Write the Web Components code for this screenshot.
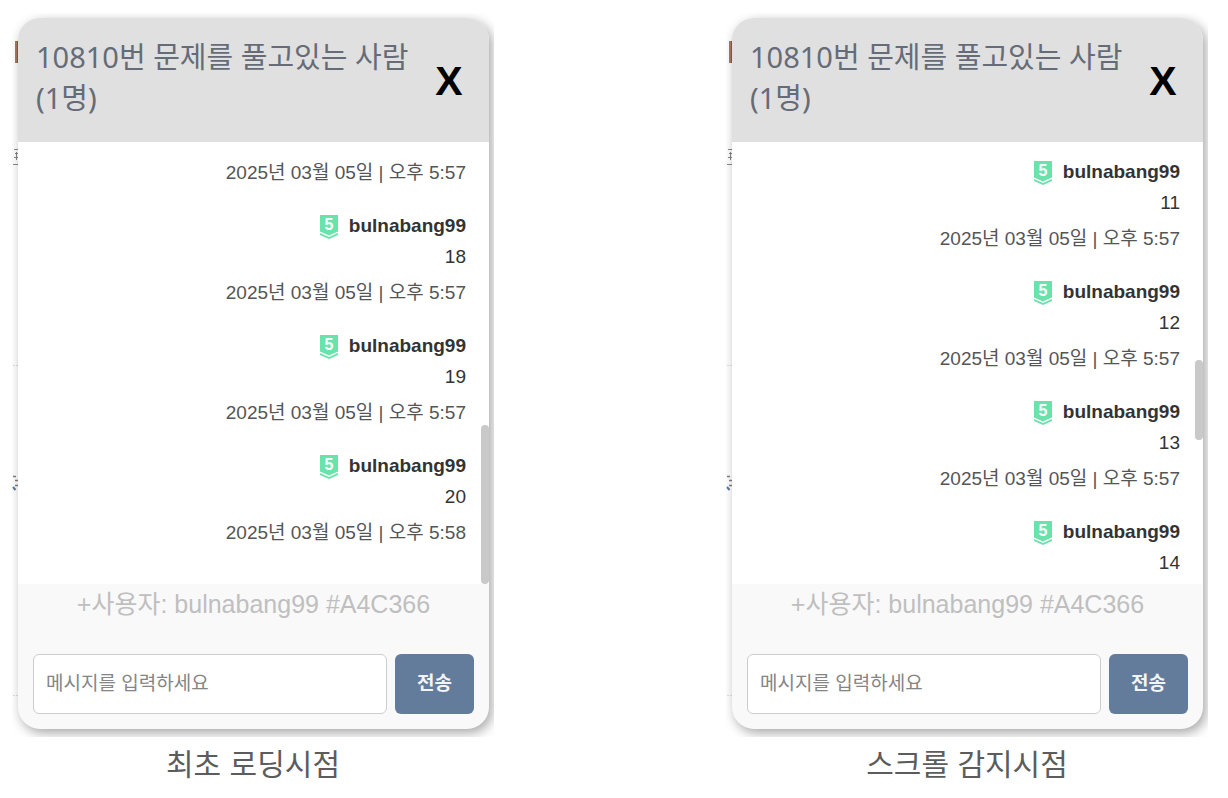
<!DOCTYPE html>
<html lang="ko">
<head>
<meta charset="utf-8">
<meta name="viewport" content="width=device-width, initial-scale=1">
<title>채팅 스크롤 비교</title>
<style>
  html, body { margin: 0; background: #fff; }
  body { font-family: "Liberation Sans", "Noto Sans CJK KR", sans-serif; }
</style>
</head>
<body>
<chat-compare>
  <chat-figure caption="최초 로딩시점">
    <chat-window heading="10810번 문제를 풀고있는 사람 (1명)" joined="+사용자: bulnabang99 #A4C366" scroll="end">
      <chat-message date="2025년 03월 05일 | 오후 5:57"></chat-message>
      <chat-message user="bulnabang99" date="2025년 03월 05일 | 오후 5:57">18</chat-message>
      <chat-message user="bulnabang99" date="2025년 03월 05일 | 오후 5:57">19</chat-message>
      <chat-message user="bulnabang99" date="2025년 03월 05일 | 오후 5:58">20</chat-message>
    </chat-window>
  </chat-figure>
  <chat-figure caption="스크롤 감지시점">
    <chat-window heading="10810번 문제를 풀고있는 사람 (1명)" joined="+사용자: bulnabang99 #A4C366" scroll="middle">
      <chat-message user="bulnabang99" date="2025년 03월 05일 | 오후 5:57">11</chat-message>
      <chat-message user="bulnabang99" date="2025년 03월 05일 | 오후 5:57">12</chat-message>
      <chat-message user="bulnabang99" date="2025년 03월 05일 | 오후 5:57">13</chat-message>
      <chat-message user="bulnabang99">14</chat-message>
    </chat-window>
  </chat-figure>
</chat-compare>

<script>
  class ChatCompare extends HTMLElement {
    constructor() {
      super();
      this.attachShadow({ mode: 'open' }).innerHTML = `
        <style>
          :host {
            display: grid;
            grid-template-columns: repeat(2, minmax(0, 482px));
            justify-content: space-between;
            gap: 24px;
            padding: 13px 20px 0 12px;
          }
        </style>
        <slot></slot>`;
    }
  }

  class ChatFigure extends HTMLElement {
    constructor() {
      super();
      this.attachShadow({ mode: 'open' }).innerHTML = `
        <style>
          :host { display: block; }
          figure { margin: 0; }
          .frame { position: relative; overflow: hidden; padding: 5px 5px 8px 6px; }
          .behind { position: absolute; left: 0; top: 0; }
          figcaption {
            font: 400 30px/50px "Noto Sans CJK KR", sans-serif;
            color: #5c5c5c;
            text-align: center;
          }
        </style>
        <figure>
          <div class="frame">
            <svg class="behind" width="6" height="724" viewBox="0 0 6 724" aria-hidden="true">
              <path d="M4 28v22" stroke="#b07a58" stroke-width="2"/>
              <path d="M5.5 28v22" stroke="#5a6a90" stroke-width="1"/>
              <path d="M2 136.500h4M3 140.500h3M2 144.500h4M4.500 139v8M1 151.500h5" stroke="#888" stroke-width="1" fill="none"/>
              <path d="M1 352.500h5M1 682.500h5" stroke="#ddd" stroke-dasharray="2 1"/>
              <path d="M1 463.500h3M3 467.500h3M3 472.500h3" stroke="#887a7a" stroke-width="1.500"/>
              <path d="M1 474l2.500 3" stroke="#5a7aa0" stroke-width="2"/>
            </svg>
            <slot></slot>
          </div>
          <figcaption></figcaption>
        </figure>`;
    }
    connectedCallback() {
      this.shadowRoot.querySelector('figcaption').textContent = this.getAttribute('caption');
    }
  }

  class TierBadge extends HTMLElement {
    constructor() {
      super();
      this.attachShadow({ mode: 'open' }).innerHTML = `
        <style>
          :host { display: block; margin-top: 2px; }
          svg { display: block; }
          text { font: 700 16px "Liberation Sans", sans-serif; fill: #fff; }
        </style>
        <svg width="18" height="24" viewBox="0 0 18 24">
          <path d="M0 0h18v16.500l-9 4-9-4z" fill="#6ae2ab"/>
          <path d="M0 18l9 4 9-4v2l-9 4-9-4z" fill="#6ae2ab"/>
          <text x="9" y="15" text-anchor="middle">5</text>
        </svg>`;
    }
  }

  class ChatMessage extends HTMLElement {
    constructor() {
      super();
      this.attachShadow({ mode: 'open' }).innerHTML = `
        <style>
          :host {
            display: flex;
            flex: none;
            flex-direction: column;
            align-items: flex-end;
            font-size: 19px;
            line-height: 31px;
            color: #333;
          }
          [hidden] { display: none !important; }
          .user { display: flex; align-items: center; gap: 11px; height: 31px; }
          .text { height: 31px; }
          time { line-height: 42px; height: 42px; margin-bottom: 16px; color: #555; white-space: nowrap; }
        </style>
        <div class="user"><tier-badge></tier-badge><b></b></div>
        <div class="text"><slot></slot></div>
        <time></time>`;
    }
    connectedCallback() {
      const root = this.shadowRoot;
      const user = this.getAttribute('user');
      const date = this.getAttribute('date');
      root.querySelector('.user').hidden = !user;
      root.querySelector('.text').hidden = !user;
      root.querySelector('b').textContent = user || '';
      root.querySelector('time').hidden = !date;
      root.querySelector('time').textContent = date || '';
    }
  }

  class ChatWindow extends HTMLElement {
    constructor() {
      super();
      this.attachShadow({ mode: 'open' }).innerHTML = `
        <style>
          :host {
            display: block;
            position: relative;
            overflow: hidden;
            border-radius: 22px;
            background: #f9f9f9;
            box-shadow: 3px 4px 12px rgba(0, 0, 0, .35);
          }
          header {
            display: flex;
            align-items: flex-start;
            gap: 12px;
            padding: 18px 24px 24px 18px;
            background: #e0e0e0;
          }
          h2 {
            flex: 1;
            margin: 0;
            font: 400 29px/41px "Noto Sans", "Noto Sans CJK KR", sans-serif;
            color: #656c78;
          }
          button { border: 0; padding: 0; cursor: pointer; }
          .close {
            align-self: center;
            width: 32px;
            padding-top: 8px;
            background: none;
            font: 700 41px/41px "Liberation Sans", sans-serif;
            color: #000;
          }
          .log {
            position: relative;
            display: flex;
            flex-direction: column;
            box-sizing: border-box;
            height: 442px;
            padding: 14px 23px;
            overflow: hidden;
            background: #fff;
          }
          :host([scroll="end"]) .log { justify-content: flex-end; }
          .thumb {
            position: absolute;
            right: 0;
            width: 8px;
            border-radius: 4px;
            background: #c9c9c9;
          }
          :host([scroll="end"]) .thumb { bottom: 0; height: 159px; }
          :host([scroll="middle"]) .thumb { top: 218px; height: 80px; }
          footer { padding: 0 15px 15px; }
          p {
            margin: 0 0 30px;
            font-size: 25px;
            line-height: 40px;
            text-align: center;
            color: #bfbfbf;
          }
          form { display: flex; gap: 8px; height: 60px; }
          input {
            flex: 1;
            min-width: 0;
            box-sizing: border-box;
            padding: 0 12px 6px;
            border: 1px solid #ccc;
            border-radius: 6px;
            background: #fff;
            font: 400 19px "Noto Sans CJK KR", sans-serif;
            color: #333;
          }
          input::placeholder { color: #858585; opacity: 1; }
          .send {
            padding: 0 22px 6px;
            border-radius: 6px;
            background: #647c9c;
            font: 700 19px "Noto Sans CJK KR", sans-serif;
            color: #f2f5f8;
          }
        </style>
        <header>
          <h2></h2>
          <button class="close" type="button" aria-label="닫기">X</button>
        </header>
        <div class="log"><slot></slot><div class="thumb"></div></div>
        <footer>
          <p></p>
          <form>
            <input type="text" aria-label="메시지" placeholder="메시지를 입력하세요">
            <button class="send" type="button">전송</button>
          </form>
        </footer>`;
    }
    connectedCallback() {
      this.shadowRoot.querySelector('h2').textContent = this.getAttribute('heading');
      this.shadowRoot.querySelector('p').textContent = this.getAttribute('joined');
    }
  }

  customElements.define('tier-badge', TierBadge);
  customElements.define('chat-message', ChatMessage);
  customElements.define('chat-window', ChatWindow);
  customElements.define('chat-figure', ChatFigure);
  customElements.define('chat-compare', ChatCompare);
</script>
</body>
</html>
